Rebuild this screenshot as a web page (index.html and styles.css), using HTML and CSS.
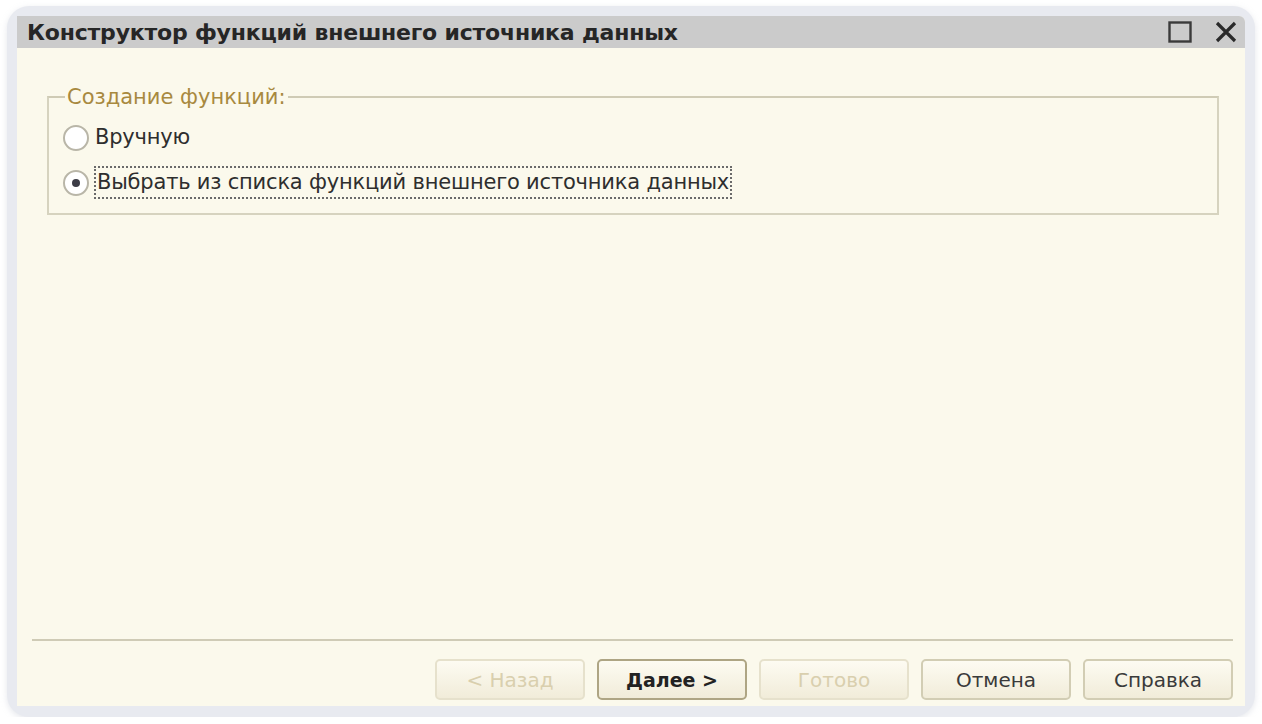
FILE: index.html
```html
<!DOCTYPE html>
<html>
<head>
    <title>Конструктор функций внешнего источника данных</title>
    <link rel="stylesheet" href="styles.css">
</head>
<body>
    <div class="frame">
        <div class="dialog">
            <div class="titlebar">
                <div class="title">Конструктор функций внешнего источника данных</div>
                <div class="controls">
                    <svg width="26" height="24" viewBox="0 0 26 24"><rect x="2.5" y="2.5" width="21" height="19" fill="none" stroke="#3a3a3a" stroke-width="2.4"/></svg>
                    <svg width="24" height="22" viewBox="0 0 24 22"><path d="M3 2 L21 20 M21 2 L3 20" stroke="#2a2a2a" stroke-width="3.2"/></svg>
                </div>
            </div>
            <div class="content">
                <fieldset class="group">
                    <legend>Создание функций:</legend>
                    <div class="option">
                        <span class="radio"></span>
                        <span class="label">Вручную</span>
                    </div>
                    <div class="option">
                        <span class="radio checked"></span>
                        <span class="label focused">Выбрать из списка функций внешнего источника данных</span>
                    </div>
                </fieldset>
            </div>
            <div class="footer">
                <div class="separator"></div>
                <div class="buttons">
                    <div class="button disabled">&lt; Назад</div>
                    <div class="button default">Далее &gt;</div>
                    <div class="button disabled">Готово</div>
                    <div class="button">Отмена</div>
                    <div class="button">Справка</div>
                </div>
            </div>
        </div>
    </div>
</body>
</html>
```

FILE: styles.css
```css
body{
    margin: 0;
    background: #ffffff;
    font-family: "DejaVu Sans", Verdana, sans-serif;
}
.frame{
    margin: 6px 7px 0 7px;
    width: 1228px;
    height: 690px;
    padding: 10px 10px 11px 10px;
    border-radius: 22px;
    background: #e8eaf0;
    box-shadow: 0 2px 6px rgba(180,185,200,0.35);
}
.dialog{
    display: flex;
    flex-direction: column;
    height: 690px;
    background: #fbf9ec;
    border-top-right-radius: 6px;
    overflow: hidden;
}
.titlebar{
    height: 32px;
    background: #cbcbcb;
    display: flex;
    align-items: center;
    justify-content: space-between;
    padding: 0 7px 0 10px;
}
.title{
    font-size: 22px;
    font-weight: bold;
    color: #262626;
    letter-spacing: -0.2px;
}
.controls{
    display: flex;
    align-items: center;
    gap: 21px;
}
.content{
    flex: 1;
    padding: 37px 26px 0 30px;
}
.group{
    margin: 0;
    padding: 12px 0 14px 14px;
    border: 2px solid #d6d3bf;
    border-top-color: #cfcbb5;
}
.group legend{
    margin-left: 2px;
    padding: 0 2px;
    font-size: 21px;
    line-height: 24px;
    color: #a8893f;
}
.option{
    display: flex;
    align-items: center;
    height: 33px;
}
.option + .option{
    margin-top: 12px;
}
.radio{
    width: 26px;
    height: 26px;
    border: 2px solid #b9b6a8;
    border-radius: 50%;
    background: #ffffff;
    box-sizing: border-box;
    margin-right: 5px;
    position: relative;
}
.radio.checked::after{
    content: "";
    position: absolute;
    left: 7px;
    top: 7px;
    width: 8px;
    height: 8px;
    border-radius: 50%;
    background: #3c3c46;
}
.label{
    font-size: 21px;
    line-height: 29px;
    color: #2e2e2e;
    padding: 0 1px;
    letter-spacing: -0.2px;
}
.focused{
    border: 2px dotted #6a6a6a;
}
.footer{
    padding: 0 12px 6px 15px;
}
.separator{
    height: 2px;
    background: #cfcbb6;
    margin-bottom: 18px;
}
.buttons{
    display: flex;
    justify-content: flex-end;
    gap: 12px;
}
.button{
    width: 150px;
    height: 41px;
    box-sizing: border-box;
    border: 2px solid #d2cdb4;
    border-radius: 5px;
    background: linear-gradient(#fdfbf2, #f1ecd9);
    display: flex;
    align-items: center;
    justify-content: center;
    font-size: 20px;
    color: #3a3a3a;
}
.button.default{
    border-color: #aea584;
    color: #222222;
    font-weight: bold;
    font-size: 19px;
}
.button.disabled{
    border-color: #e6e1cc;
    color: #d9cfae;
}
```
